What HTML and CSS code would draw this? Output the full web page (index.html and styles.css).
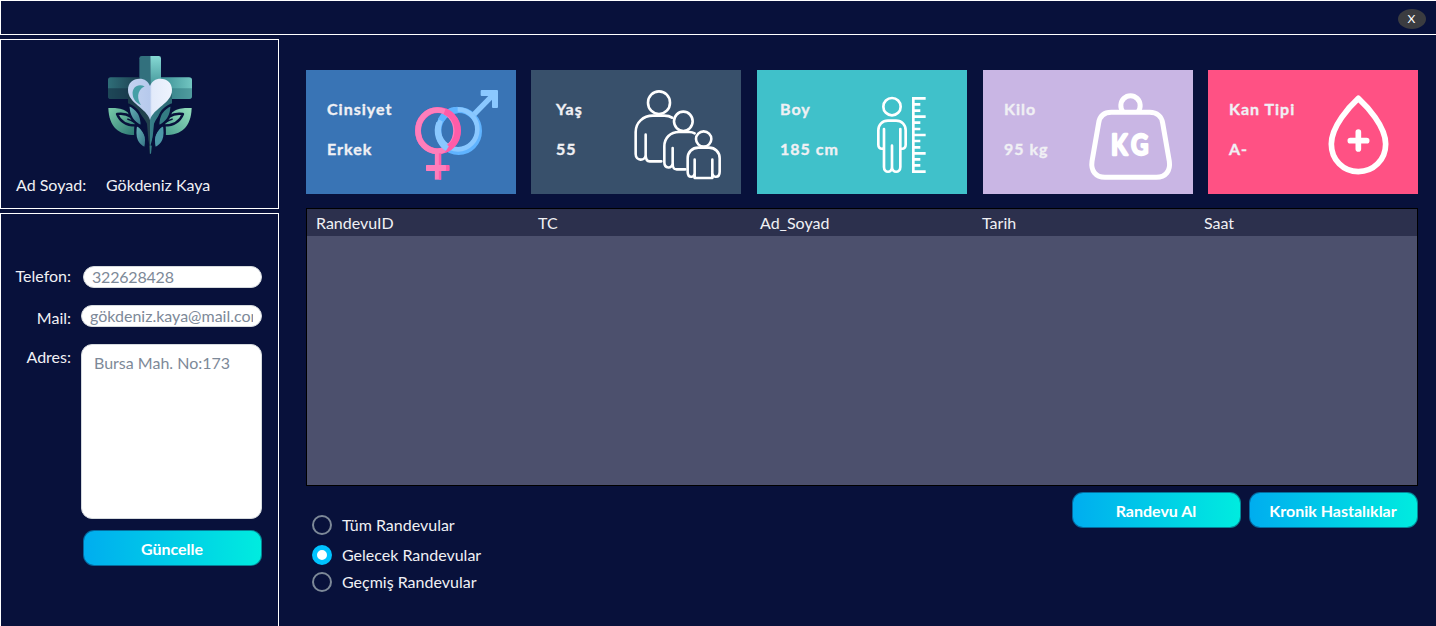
FILE: index.html
```html
<!DOCTYPE html>
<html lang="tr">
<head>
<meta charset="utf-8">
<title>Hasta Paneli</title>
<link rel="stylesheet" href="styles.css">
</head>
<body>
<header class="titlebar"><button class="close">X</button></header>
<div class="layout">
  <aside class="sidebar">
    <section class="profile">
      <svg class="logo" viewBox="48 30 264 300">
        <defs>
          <linearGradient id="armL" x1="0" x2="1"><stop offset="0" stop-color="#2f6e78"/><stop offset="1" stop-color="#1c3f50"/></linearGradient>
          <linearGradient id="armR" x1="0" x2="1"><stop offset="0" stop-color="#3b8f95"/><stop offset="1" stop-color="#72c6c1"/></linearGradient>
          <linearGradient id="top" x1="0" y1="0" x2="0" y2="1"><stop offset="0" stop-color="#86d9d4"/><stop offset="1" stop-color="#3f9195"/></linearGradient>
          <linearGradient id="stem" x1="0" x2="1"><stop offset="0" stop-color="#1b3c49"/><stop offset=".49" stop-color="#23434f"/><stop offset=".51" stop-color="#377f88"/><stop offset="1" stop-color="#2b6671"/></linearGradient>
          <linearGradient id="heart" x1="0" x2="1"><stop offset="0" stop-color="#c3d3f0"/><stop offset=".5" stop-color="#b6c9ec"/><stop offset=".54" stop-color="#e2eafa"/><stop offset="1" stop-color="#eef3fd"/></linearGradient>
          <linearGradient id="leafL" x1="0" y1="0" x2="1" y2="1"><stop offset="0" stop-color="#79cba9"/><stop offset="1" stop-color="#2c7773"/></linearGradient>
          <linearGradient id="leafR" x1="1" y1="0" x2="0" y2="1"><stop offset="0" stop-color="#94dfbd"/><stop offset="1" stop-color="#4a9f8f"/></linearGradient>
          <linearGradient id="leafS" x1="0" y1="0" x2="1" y2="1"><stop offset="0" stop-color="#6cb7bd"/><stop offset="1" stop-color="#316f80"/></linearGradient>
        </defs>
        <path d="M181 33h-26q-7 0-7 7v95h33z" fill="#32707d"/>
        <path d="M181 33h25q7 0 7 7v90h-32z" fill="url(#top)"/>
        <path d="M148 97H62q-8 0-8 8v48q0 9 8 9h86z" fill="url(#armL)"/>
        <path d="M54 130h94v32H62q-8 0-8-9z" fill="#142f42" opacity=".6"/>
        <path d="M213 97h84q9 0 9 8v48q0 9-9 9h-84z" fill="url(#armR)"/>
        <path d="M213 130h93v23q0 9-9 9h-84z" fill="#286a76" opacity=".45"/>
        <path d="M114 145h132v35c-18 8-42 28-54 56l-9 90h-4l-8-90c-12-27-40-48-57-57z" fill="url(#stem)"/>
        <path d="M180 225c-10-36-66-50-66-90 0-22 15-34 34-34 16 0 27 8 32 22 5-14 16-22 32-22 19 0 34 12 34 34 0 40-56 54-66 90z" fill="url(#heart)"/>
        <path d="M164 124c-21-10-38 4-36 24 1 16 12 27 25 32-11-15-15-43 11-56z" fill="#459fa6"/>
        <path d="M55 189c31-1 65 1 78 45l1 36c-48 0-77-23-79-81z" fill="url(#leafL)"/>
        <path d="M305 189c-31-1-65 1-78 45l-1 36c48 0 77-23 79-81z" fill="url(#leafR)"/>
        <g stroke="#08113b" stroke-width="7" stroke-linejoin="round">
          <path d="M81 207c27-4 48 4 62 34-31 2-51-7-62-34z" fill="url(#leafL)"/>
          <path d="M279 207c-27-4-48 4-62 34 31 2 51-7 62-34z" fill="url(#leafR)"/>
          <path d="M115 179c29 12 42 32 40 65-27-11-40-31-40-65z" fill="url(#leafS)"/>
          <path d="M245 179c-29 12-42 32-40 65 27-11 40-31 40-65z" fill="#347c83"/>
          <path d="M138 240c29 10 35 36 28 70-24-9-35-33-28-70z" fill="url(#leafS)"/>
          <path d="M222 240c-29 10-35 36-28 70 24-9 35-33 28-70z" fill="#4c98a8"/>
        </g>
        <path d="M112 222c28 8 54 34 64 80M248 222c-28 8-54 34-64 80" fill="none" stroke="#08113b" stroke-width="5"/>
      </svg>
      <div class="name"><span class="name-label">Ad Soyad:</span><span>Gökdeniz Kaya</span></div>
    </section>
    <section class="contact">
      <div class="row phone"><label for="tel">Telefon:</label><input id="tel" value="322628428"></div>
      <div class="row mail"><label for="mail">Mail:</label><input id="mail" value="gökdeniz.kaya@mail.com"></div>
      <div class="row address"><label for="adr">Adres:</label><textarea id="adr">Bursa Mah. No:173</textarea></div>
      <button class="btn update">Güncelle</button>
    </section>
  </aside>
  <main class="content">
    <div class="cards">
      <article class="card gender">
        <div class="card-text"><div>Cinsiyet</div><div>Erkek</div></div>
        <svg viewBox="342 87 255 276" fill="none">
          <ellipse cx="476" cy="213" rx="61" ry="63" stroke="#5fb3ff" stroke-width="18"/>
          <ellipse cx="474" cy="208" rx="58" ry="60" stroke="#8ac8ff" stroke-width="14"/>
          <path d="M422 181a61 63 0 0 1 51-31" stroke="#5fb3ff" stroke-width="19"/>
          <path d="M522 163l55-56" stroke="#8ac8ff" stroke-width="16"/>
          <path d="M542 93q0-3 3-3h46q3 0 3 3v48q0 3-3 3h-12q-3 0-3-3v-33h-31q-3 0-3-3z" fill="#8ac8ff"/>
          <ellipse cx="414" cy="212" rx="60" ry="62" stroke="#ff5ca8" stroke-width="18"/>
          <ellipse cx="411" cy="212" rx="57" ry="62" stroke="#ff7ebb" stroke-width="17"/>
          <path d="M434 154a60 62 0 0 1 0 116" stroke="#ff5ca8" stroke-width="18"/>
          <path d="M414 280v79" stroke="#ff7ebb" stroke-width="19"/>
          <path d="M420 280v79" stroke="#ff5ca8" stroke-width="7"/>
          <rect x="378" y="315" width="71" height="18" rx="3" fill="#ff5ca8"/>
          <rect x="378" y="315" width="60" height="18" rx="3" fill="#ff7ebb"/>
          <path d="M417 189a61 63 0 0 0 25 77" stroke="#8ac8ff" stroke-width="17"/>
        </svg>
      </article>
      <article class="card age">
        <div class="card-text"><div>Yaş</div><div>55</div></div>
        <svg viewBox="324 87 270 276" fill="none" stroke="#fff" stroke-width="7.8" stroke-linecap="round" stroke-linejoin="round">
          <ellipse cx="402" cy="128" rx="33" ry="34"/>
          <path d="M441 173c-7-5-15-6-23-6h-34c-30 0-52 21-52 49v66c0 22 29 22 30 3v-61M362 285c0 13 3 19 12 19h35"/>
          <ellipse cx="475" cy="184" rx="28" ry="29"/>
          <path d="M509 220c-5-3-10-4-16-4h-31c-26 0-44 18-44 43v48c0 20 24 20 25 3v-46M443 310c0 12 2 18 12 18h26"/>
          <circle cx="536" cy="237" r="23"/>
          <path d="M520 263h32c19 0 32 14 32 32v40c0 20-22 20-22 3v-39 55h-53v-55 39c0 17-21 17-21-3v-40c0-18 13-32 32-32z"/>
        </svg>
      </article>
      <article class="card height">
        <div class="card-text"><div>Boy</div><div>185 cm</div></div>
        <svg viewBox="378 108 153 234" fill="none" stroke="#fff" stroke-width="8" stroke-linecap="round" stroke-linejoin="round">
          <circle cx="426" cy="140" r="26"/>
          <path d="M402 207v114c0 19 24 19 24 0v-64 64c0 19 25 19 25 0V207M398 266c-9 1-13-4-13-12v-43c0-17 12-29 29-29h24c17 0 29 12 29 29v43c0 8-4 13-13 12"/>
          <path d="M490 111v228M490 115h37M490 133h21M490 152h21M490 170h37M490 188h21M490 207h21M490 225h37M490 243h21M490 262h21M490 280h37M490 298h21M490 316h21M490 335h37" stroke-linecap="butt"/>
        </svg>
      </article>
      <article class="card weight">
        <div class="card-text"><div>Kilo</div><div>95 kg</div></div>
        <svg viewBox="339 87 255 276" fill="none" stroke="#fff" stroke-width="15">
          <path d="M444 156a29 30 0 1 1 45 0"/>
          <path d="M409 157h115c23 0 36 13 39 32l20 115c4 28-11 48-39 48H390c-28 0-43-20-39-48l20-115c3-19 15-32 38-32z"/>
          <text transform="translate(408 284) scale(.86 1)" x="0 70" y="0" class="kg">KG</text>
        </svg>
      </article>
      <article class="card blood">
        <div class="card-text"><div>Kan Tipi</div><div>A-</div></div>
        <svg viewBox="381 102 189 246" fill="none" stroke="#fff" stroke-width="17" stroke-linecap="round" stroke-linejoin="round">
          <path d="M475 115c-25 23-81 83-81 137 0 48 36 83 81 83s82-35 82-83c0-54-57-114-82-137z"/>
          <path d="M475 216v51M451 242h49"/>
        </svg>
      </article>
    </div>
    <div class="table">
      <div class="thead"><span>RandevuID</span><span>TC</span><span>Ad_Soyad</span><span>Tarih</span><span>Saat</span></div>
    </div>
    <div class="footer">
      <div class="radios">
        <div class="radio"><i class="dot"></i>Tüm Randevular</div>
        <div class="radio"><i class="dot checked"></i>Gelecek Randevular</div>
        <div class="radio"><i class="dot"></i>Geçmiş Randevular</div>
      </div>
      <div class="actions"><button class="btn">Randevu Al</button><button class="btn">Kronik Hastalıklar</button></div>
    </div>
  </main>
</div>
</body>
</html>
```
FILE: styles.css
```css
* { box-sizing: border-box; }
body {
  margin: 0;
  height: 626px;
  overflow: hidden;
  background: #08113b;
  color: #f0f0f4;
  font: 16px/22px Lato, sans-serif;
}
button, input, textarea { font: inherit; border: 0; outline: 0; margin: 0; }
.titlebar {
  height: 35px;
  border: 1px solid #fff;
  border-right: 0;
  display: flex;
  justify-content: flex-end;
  padding: 8px 10px 0 0;
}
.close {
  width: 28px;
  height: 20px;
  padding: 0 1px 0 0;
  border-radius: 50%;
  background: #3b3c40;
  color: #fff;
  font-size: 12px;
  line-height: 20px;
}
.layout { display: flex; padding-top: 4px; }
.sidebar { width: 279px; display: flex; flex-direction: column; gap: 4px; }
.profile { height: 170px; border: 1px solid #fff; padding-top: 15px; }
.logo { display: block; width: 88px; height: 100px; margin-left: 105px; }
.name { display: flex; margin: 19px 0 0 15px; }
.name-label { width: 90px; }
.contact {
  height: 430px;
  border: 1px solid #fff;
  padding: 52px 16px 0 0;
  display: flex;
  flex-direction: column;
}
.row { display: flex; justify-content: space-between; height: 22px; margin-bottom: 17px; }
.row label { width: 70px; text-align: right; }
.phone label { margin-top: -1px; }
.mail label, .address label { margin-top: 2px; }
.row input, .row textarea {
  width: 181px;
  height: 22px;
  background: #fff;
  border: 1px solid #d5dade;
  border-radius: 11px;
  padding: 0 8px;
  color: #7d8998;
}
.row.phone input { width: 179px; letter-spacing: -.2px; }
.row.address { height: 175px; margin-bottom: 11px; }
.row textarea { height: 175px; padding: 7px 12px; resize: none; border-radius: 11px; }
.btn {
  width: 169px;
  height: 36px;
  border: 1px solid rgba(8, 17, 59, .45);
  border-radius: 11px;
  background: linear-gradient(90deg, #00adef, #00ecdf) border-box;
  color: #fff;
  font-weight: 700;
  padding: 1px 1px 0 0;
}
.update { width: 179px; align-self: flex-end; }
.content { width: 1112px; margin: 31px 0 0 27px; }
.cards { display: grid; grid-template-columns: 225px 226px 226px 225px 210px; }
.card {
  width: 210px;
  height: 124px;
  display: flex;
  justify-content: space-between;
  align-items: flex-start;
  font-weight: 700;
  line-height: 40px;
  letter-spacing: 1px;
}
.card-text { padding-top: 19px; white-space: nowrap; -webkit-text-stroke: .35px currentColor; }
.gender { background: #3974b5; padding-left: 21px; }
.gender svg { width: 85px; height: 92px; margin: 19px 17px 0 0; }
.age { background: #38506b; padding-left: 25px; }
.age svg { width: 90px; height: 92px; margin: 19px 18px 0 0; }
.height { background: #40c1ca; padding-left: 23px; }
.height svg { width: 51px; height: 78px; margin: 26px 40px 0 0; }
.weight { background: #c9b6e4; padding-left: 21px; }
.weight svg { width: 85px; height: 92px; margin: 19px 20px 0 0; }
.blood { background: #ff5184; padding-left: 21px; }
.blood svg { width: 63px; height: 82px; margin: 24px 28px 0 0; }
.kg {
  font-size: 84px;
  font-weight: 700;
  letter-spacing: 0;
  fill: #fff;
  stroke-width: 7px;
  stroke-linejoin: round;
}
.table { height: 278px; margin-top: 14px; border: 1px solid #000; background: #4c506d; }
.thead {
  display: grid;
  grid-template-columns: repeat(5, 222px);
  height: 27px;
  line-height: 28px;
  background: #2c304d;
}
.thead span { padding-left: 9px; }
.footer { display: flex; justify-content: space-between; padding-top: 6px; }
.radios { padding: 22px 0 0 6px; }
.radio { display: flex; align-items: center; gap: 10px; height: 22px; margin-bottom: 8px; }
.radio:nth-child(2) { margin-bottom: 5px; }
.dot { width: 20px; height: 20px; border: 2px solid #7d8998; border-radius: 50%; }
.dot.checked { border: 5px solid #00c3ff; background: #fff; }
.actions { display: flex; gap: 8px; }
```
